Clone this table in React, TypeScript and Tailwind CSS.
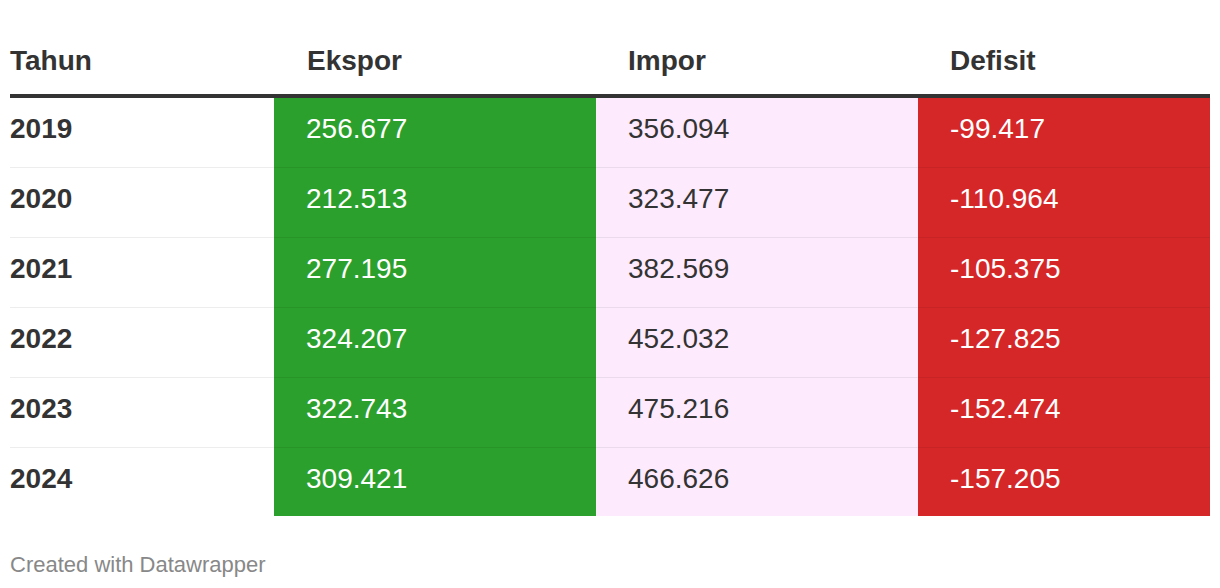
const rows = [
  { tahun: '2019', ekspor: '256.677', impor: '356.094', defisit: '-99.417' },
  { tahun: '2020', ekspor: '212.513', impor: '323.477', defisit: '-110.964' },
  { tahun: '2021', ekspor: '277.195', impor: '382.569', defisit: '-105.375' },
  { tahun: '2022', ekspor: '324.207', impor: '452.032', defisit: '-127.825' },
  { tahun: '2023', ekspor: '322.743', impor: '475.216', defisit: '-152.474' },
  { tahun: '2024', ekspor: '309.421', impor: '466.626', defisit: '-157.205' },
]

const App = () => {
  return (
    <div className="w-[1220px] h-[588px] bg-white px-[10px] pt-[45px] text-[#333] font-['Liberation_Sans',Arial,sans-serif]">
      <div className="flex text-[28px] leading-[32px] font-bold border-b-4 border-[#333] pb-[17px]">
        <div className="w-[264px]">Tahun</div>
        <div className="w-[322px] pl-[33px]">Ekspor</div>
        <div className="w-[322px] pl-[32px]">Impor</div>
        <div className="w-[292px] pl-[32px]">Defisit</div>
      </div>
      <div className="flex flex-col">
        {rows.map((row, i) => {
          const last = i === rows.length - 1
          const line = last ? 'h-[68px]' : 'h-[70px] border-b border-[rgba(0,0,0,0.07)]'
          return (
            <div key={row.tahun} className="flex text-[28px] leading-[32px]">
              <div className={`w-[264px] pt-[15px] font-bold ${line}`}>{row.tahun}</div>
              <div className={`w-[322px] pl-[32px] pt-[15px] bg-[#2ca02c] text-white ${line}`}>{row.ekspor}</div>
              <div className={`w-[322px] pl-[32px] pt-[15px] bg-[#fdebfd] ${line}`}>{row.impor}</div>
              <div className={`w-[292px] pl-[32px] pt-[15px] bg-[#d62728] text-white ${line}`}>{row.defisit}</div>
            </div>
          )
        })}
      </div>
      <div className="mt-[36px] text-[22px] leading-[25px] text-[#888]">Created with Datawrapper</div>
    </div>
  )
}

export default App
